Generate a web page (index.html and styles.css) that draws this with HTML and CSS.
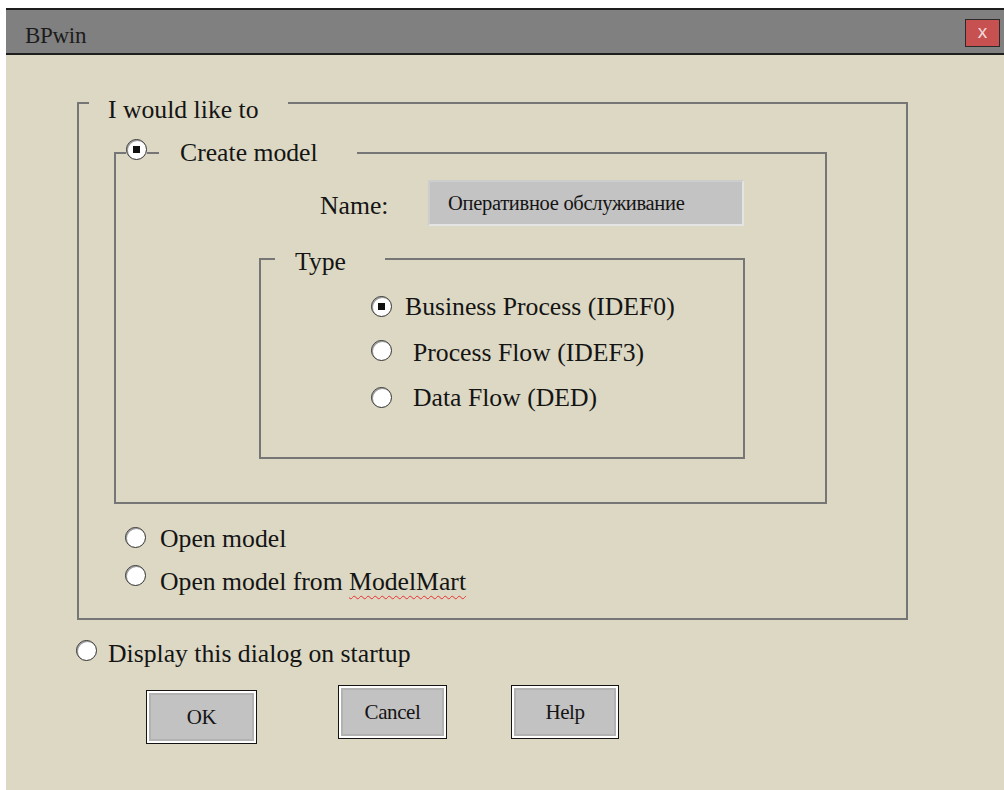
FILE: index.html
```html
<!DOCTYPE html>
<html lang="en">
<head>
<meta charset="utf-8">
<title>BPwin</title>
<link rel="stylesheet" href="styles.css">
</head>
<body>
<div class="window">
  <div class="titlebar">
    <span class="title">BPwin</span>
    <span class="close">x</span>
  </div>
  <div class="content">
    <fieldset class="group group--outer">
      <legend class="caption caption--outer">I would like to</legend>

      <fieldset class="group group--create">
        <legend class="caption caption--create">
          <span class="radio radio--checked radio--legend"></span>
          <span class="tick-line"></span>
          <span class="caption-text">Create model</span>
        </legend>

        <div class="name-row">
          <span class="name-label">Name:</span>
          <span class="name-field">Оперативное обслуживание</span>
        </div>

        <fieldset class="group group--type">
          <legend class="caption caption--type">Type</legend>
          <div class="type-options">
            <div class="option">
              <span class="radio radio--checked radio--type1"></span>
              <span class="option-text option-text--near">Business Process (IDEF0)</span>
            </div>
            <div class="option">
              <span class="radio radio--type2"></span>
              <span class="option-text option-text--far">Process Flow (IDEF3)</span>
            </div>
            <div class="option">
              <span class="radio radio--type3"></span>
              <span class="option-text option-text--far">Data Flow (DED)</span>
            </div>
          </div>
        </fieldset>
      </fieldset>

      <div class="open-options">
        <div class="option">
          <span class="radio radio--open"></span>
          <span class="option-text option-text--open">Open model</span>
        </div>
        <div class="option">
          <span class="radio radio--raised"></span>
          <span class="option-text option-text--open">Open model from <span class="misspelled">ModelMart</span></span>
        </div>
      </div>
    </fieldset>

    <div class="option option--startup">
      <span class="radio radio--startup"></span>
      <span class="option-text option-text--startup">Display this dialog on startup</span>
    </div>

    <div class="buttons">
      <button class="btn btn--ok">OK</button>
      <button class="btn btn--cancel">Cancel</button>
      <button class="btn btn--help">Help</button>
    </div>
  </div>
</div>
</body>
</html>
```

FILE: styles.css
```css
* {
  box-sizing: border-box;
}

html, body {
  margin: 0;
  padding: 0;
  background: #ffffff;
}

body {
  font-family: "Liberation Serif", "Times New Roman", serif;
  color: #141414;
  overflow: hidden;
}

.window {
  margin: 8px 0 0 6px;
  width: 998px;
  height: 782px;
  background: #dcd8c3;
  overflow: hidden;
}

/* caption bar */
.titlebar {
  display: flex;
  justify-content: space-between;
  align-items: flex-start;
  height: 47px;
  background: #808080;
  border-top: 2px solid #1e1e1e;
  border-bottom: 2px solid #1e1e1e;
  padding: 0 4px 0 19px;
}

.title {
  margin-top: 11px;
  font-size: 23px;
  line-height: 30px;
  color: #1c1c1c;
  letter-spacing: -0.3px;
}

.close {
  margin-top: 9px;
  width: 35px;
  height: 28px;
  background: #c75050;
  border: 1px solid #2a2a2a;
  color: #f3dada;
  font-family: "Liberation Sans", Arial, sans-serif;
  font-size: 19px;
  line-height: 24px;
  text-align: center;
}

/* dialog body */
.content {
  padding-top: 26px;
  font-size: 25.7px;
  line-height: 30px;
}

.group {
  margin: 0;
  padding: 0;
  min-width: 0;
  border: 2px solid #767676;
}

.caption {
  padding: 0;
  font-size: 25.7px;
  line-height: 30px;
}

.group--outer {
  margin-left: 71px;
  width: 831px;
  padding-bottom: 21px;
}

.caption--outer {
  margin-left: 10px;
  padding: 14px 29px 0 19px;
}

.group--create {
  margin: 13px 0 0 35px;
  width: 713px;
  padding-bottom: 43px;
}

.caption--create {
  display: flex;
  align-items: flex-start;
  margin-left: 10px;
  padding-right: 39px;
}

.tick-line {
  width: 12px;
  height: 2px;
  margin-top: 14px;
  background: #767676;
}

.caption-text {
  margin-left: 21px;
}

/* model name */
.name-row {
  display: flex;
  align-items: flex-start;
  margin: 12px 0 0 204px;
}

.name-label {
  margin-top: 11px;
  width: 108px;
}

.name-field {
  width: 316px;
  height: 46px;
  padding-left: 18px;
  background: #c3c3c3;
  border: 2px solid;
  border-color: #cdcdcd #e4e4e4 #e4e4e4 #cdcdcd;
  font-size: 20.5px;
  line-height: 42px;
  letter-spacing: -0.3px;
}

/* model type */
.group--type {
  margin: 14px 0 0 143px;
  width: 486px;
  padding-bottom: 44px;
}

.caption--type {
  margin-left: 14px;
  padding: 7px 39px 0 20px;
}

.type-options {
  display: flex;
  flex-direction: column;
  gap: 15.5px;
  padding: 15px 0 0 110px;
}

.option {
  display: flex;
  align-items: flex-start;
  white-space: nowrap;
}

/* radio buttons */
.radio {
  position: relative;
  flex: none;
  width: 21px;
  height: 21px;
  margin-top: 3px;
  border-radius: 50%;
  background: #ffffff;
  border: 1.5px solid #303030;
  box-shadow: inset 1px 1px 0 #9a9a9a;
}

.radio--checked::after {
  content: "";
  position: absolute;
  left: 50%;
  top: 50%;
  width: 7px;
  height: 7px;
  margin: -3.5px 0 0 -3.5px;
  background: #111111;
}

.radio--legend {
  margin-top: 1px;
}

.radio--type1 {
  margin-top: 4px;
}

.radio--type2 {
  margin-top: 2px;
}

.radio--type3 {
  margin-top: 3.5px;
}

.radio--open {
  margin-top: 2.5px;
}

.radio--raised {
  margin-top: -2.5px;
}

.radio--startup {
  margin-top: 0.5px;
}

.option-text--near {
  margin-left: 13px;
}

.option-text--far {
  margin-left: 21px;
}

.open-options {
  display: flex;
  flex-direction: column;
  gap: 13px;
  margin: 20px 0 0 46px;
}

.option-text--open {
  margin-left: 14px;
}

.misspelled {
  text-decoration: underline wavy #e83030;
  text-decoration-thickness: 1px;
  text-underline-offset: 5px;
}

.option--startup {
  margin: 19px 0 0 70px;
}

.option-text--startup {
  margin-left: 11px;
}

/* command buttons */
.buttons {
  display: flex;
  align-items: flex-start;
  margin: 16px 0 0 140px;
}

.btn {
  height: 54px;
  padding: 0;
  background: #c2c2c2;
  border: 1px solid #141414;
  box-shadow: inset 0 0 0 2px #ffffff, inset 0 0 0 4px #b2b2b2;
  font-family: "Liberation Serif", "Times New Roman", serif;
  font-size: 21px;
  color: #141414;
  letter-spacing: -0.4px;
}

.btn--ok {
  width: 111px;
  margin-top: 5px;
}

.btn--cancel {
  width: 109px;
  margin-left: 81px;
}

.btn--help {
  width: 108px;
  margin-left: 64px;
}
```
